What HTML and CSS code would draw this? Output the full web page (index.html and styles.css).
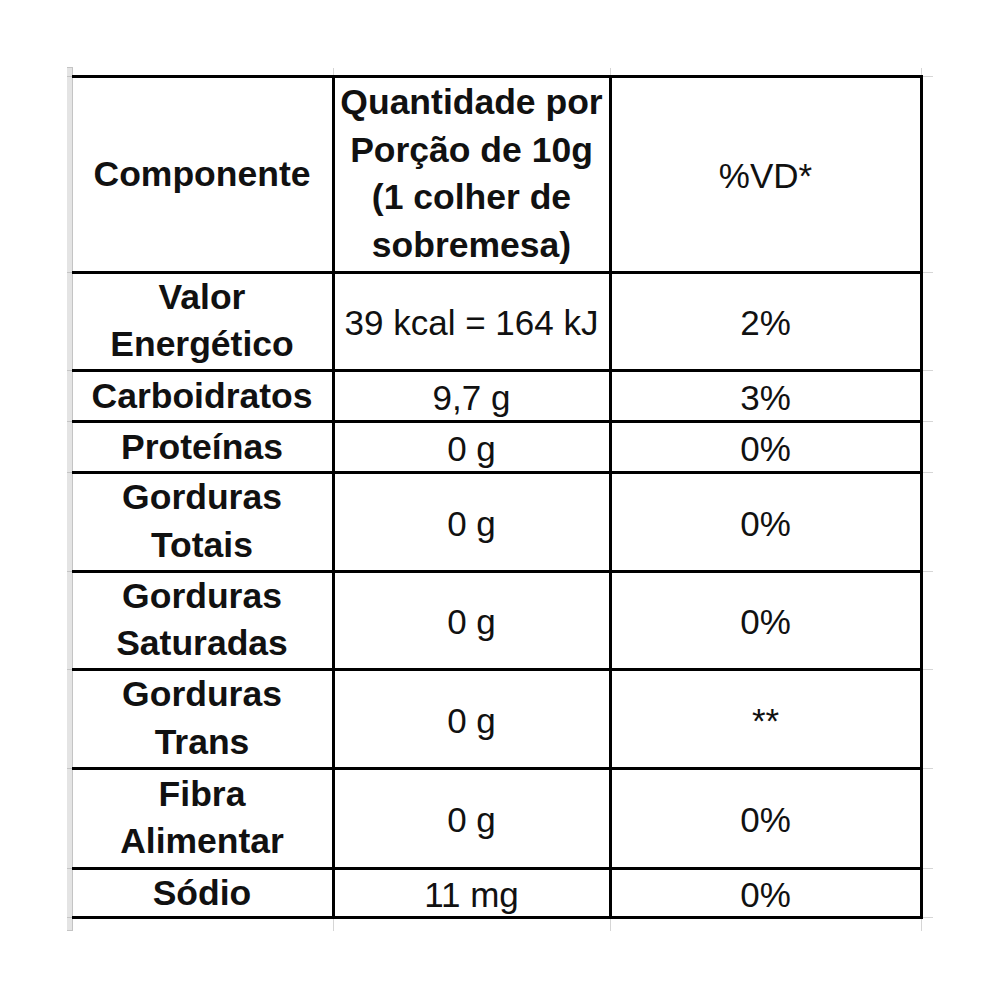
FILE: index.html
```html
<!DOCTYPE html>
<html lang="pt-BR">
<head>
<meta charset="utf-8">
<title>Informação Nutricional</title>
<link rel="stylesheet" href="styles.css">
</head>
<body>
<table class="sheet">
  <colgroup>
    <col class="c-band">
    <col class="c-comp">
    <col class="c-qty">
    <col class="c-vd">
    <col class="c-edge">
  </colgroup>
  <tr class="r-top">
    <td class="band"></td><td class="stub"></td><td class="stub"></td><td class="stub"></td><td class="edge"></td>
  </tr>
  <tr class="r-head">
    <td class="band"></td>
    <td class="cell comp name">Componente</td>
    <td class="cell name multi">Quantidade por<br>Porção de 10g<br>(1 colher de<br>sobremesa)</td>
    <td class="cell val">%VD*</td>
    <td class="edge"></td>
  </tr>
  <tr class="r-98">
    <td class="band"></td>
    <td class="cell comp name multi">Valor<br>Energético</td>
    <td class="cell val">39 kcal = 164 kJ</td>
    <td class="cell val">2%</td>
    <td class="edge"></td>
  </tr>
  <tr class="r-51">
    <td class="band"></td>
    <td class="cell comp name">Carboidratos</td>
    <td class="cell val">9,7 g</td>
    <td class="cell val">3%</td>
    <td class="edge"></td>
  </tr>
  <tr class="r-51">
    <td class="band"></td>
    <td class="cell comp name">Proteínas</td>
    <td class="cell val">0 g</td>
    <td class="cell val">0%</td>
    <td class="edge"></td>
  </tr>
  <tr class="r-99">
    <td class="band"></td>
    <td class="cell comp name multi">Gorduras<br>Totais</td>
    <td class="cell val">0 g</td>
    <td class="cell val">0%</td>
    <td class="edge"></td>
  </tr>
  <tr class="r-98">
    <td class="band"></td>
    <td class="cell comp name multi">Gorduras<br>Saturadas</td>
    <td class="cell val">0 g</td>
    <td class="cell val">0%</td>
    <td class="edge"></td>
  </tr>
  <tr class="r-99">
    <td class="band"></td>
    <td class="cell comp name multi">Gorduras<br>Trans</td>
    <td class="cell val">0 g</td>
    <td class="cell val">**</td>
    <td class="edge"></td>
  </tr>
  <tr class="r-100">
    <td class="band"></td>
    <td class="cell comp name multi">Fibra<br>Alimentar</td>
    <td class="cell val">0 g</td>
    <td class="cell val">0%</td>
    <td class="edge"></td>
  </tr>
  <tr class="r-49">
    <td class="band"></td>
    <td class="cell comp name">Sódio</td>
    <td class="cell val">11 mg</td>
    <td class="cell val">0%</td>
    <td class="edge"></td>
  </tr>
  <tr class="r-bottom">
    <td class="band"></td><td class="stub"></td><td class="stub"></td><td class="stub"></td><td class="edge"></td>
  </tr>
</table>
</body>
</html>
```

FILE: styles.css
```css
html, body {
  margin: 0;
  padding: 0;
  background: #ffffff;
}

.sheet {
  border-collapse: collapse;
  table-layout: fixed;
  margin: 67px 0 0 67px;
  font-family: "Liberation Sans", Arial, sans-serif;
  color: #111111;
}

.c-band { width: 5px; }
.c-comp { width: 261px; }
.c-qty { width: 277px; }
.c-vd { width: 311px; }
.c-edge { width: 12px; }

.sheet td {
  padding: 0;
  text-align: center;
  border: 1px solid #d6d6d6;
  white-space: nowrap;
}

.sheet td.band {
  background: #e4e4e4;
  border-left: none;
  border-right: 1px solid #c4c4c4;
  border-top: 1px solid #c4c4c4;
  border-bottom: 1px solid #c4c4c4;
}

.sheet td.edge {
  border-right: none;
}

.r-top td {
  height: 7px;
  border-top: none;
}

.r-bottom td {
  height: 12px;
  border-bottom: none;
}

.r-head td { height: 189px; }
.r-98 td { height: 91px; }
.r-99 td { height: 92px; }
.r-100 td { height: 93px; }
.r-51 td { height: 44px; }
.r-49 td { height: 42px; }

.sheet td.cell {
  border: 3px solid #000000;
  vertical-align: middle;
}

.sheet td.comp {
  border-left: 1px solid #c4c4c4;
}

.name {
  font-weight: 700;
  font-size: 35.5px;
  line-height: 46px;
}

.name.multi {
  line-height: 47.5px;
}

.val {
  font-weight: 400;
  font-size: 35px;
  line-height: 42px;
  padding-top: 4px !important;
}
```
